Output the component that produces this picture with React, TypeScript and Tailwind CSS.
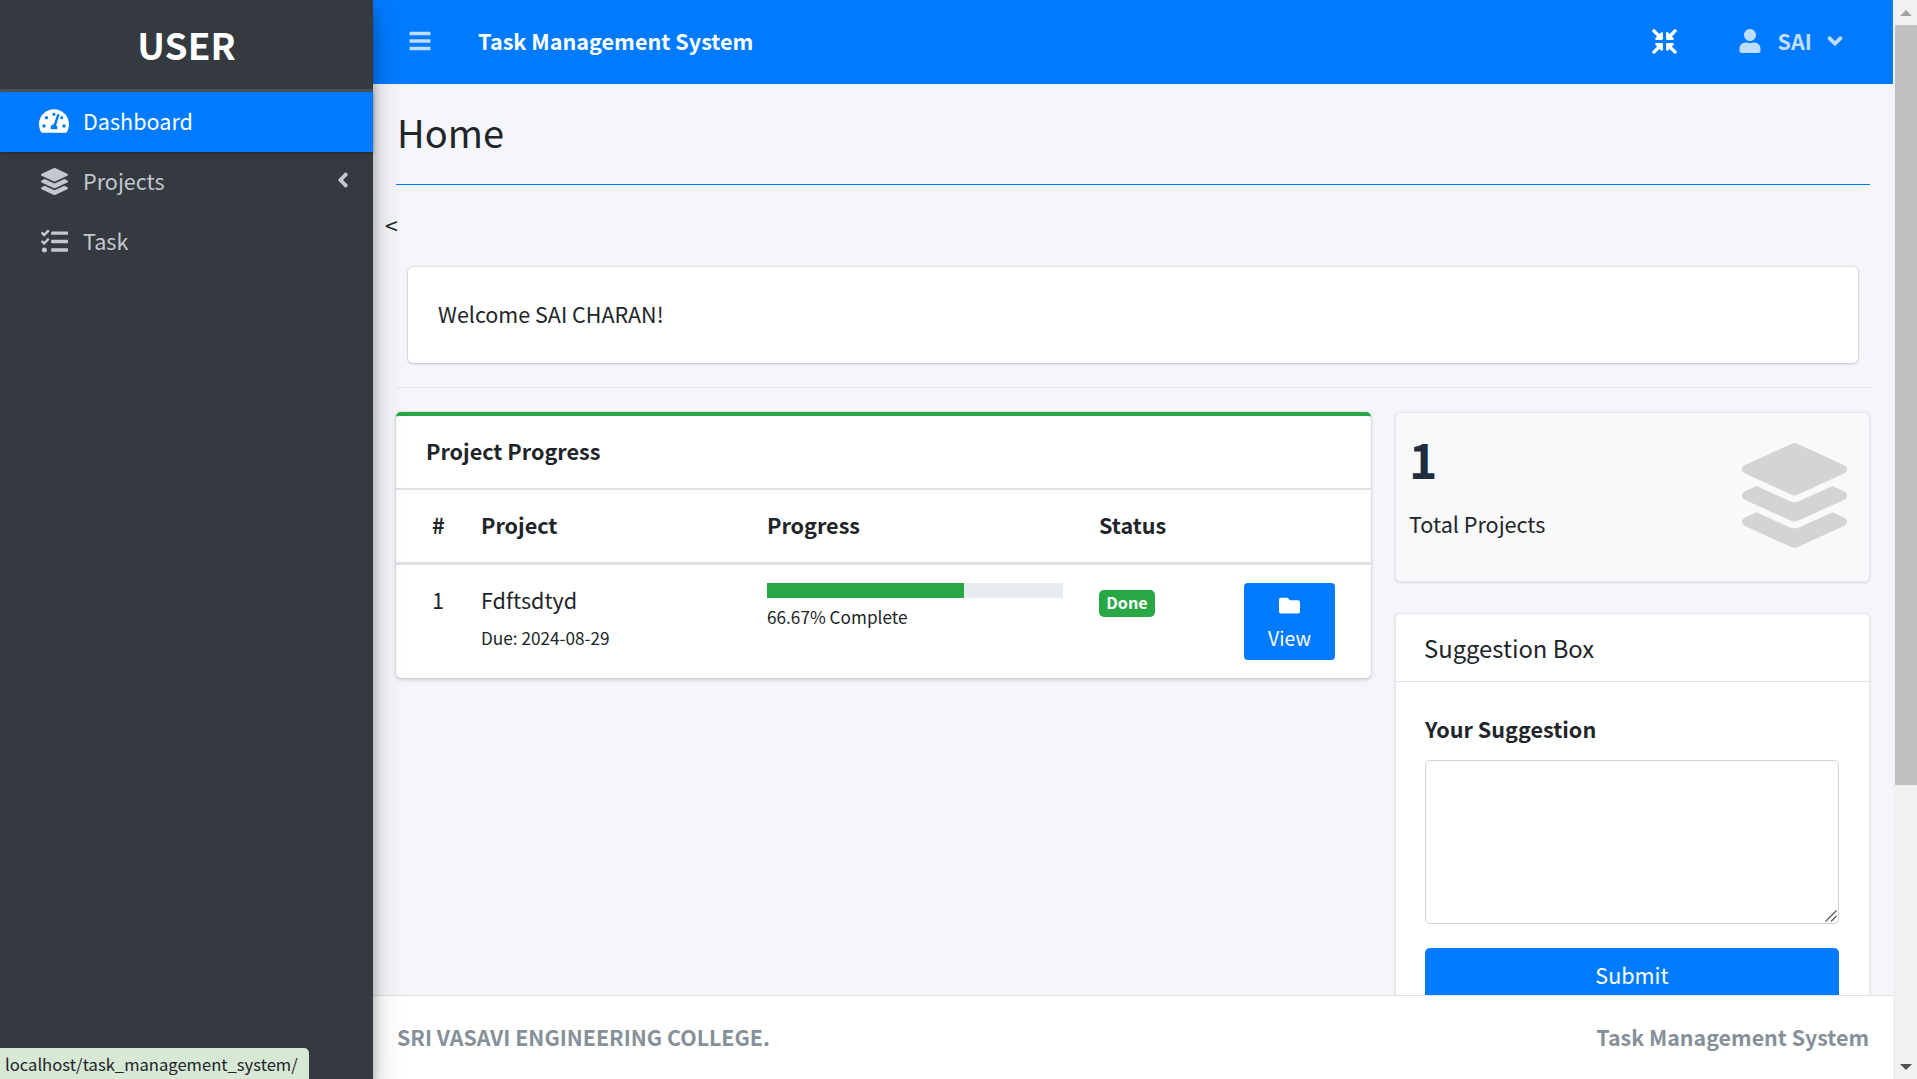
import { FaAngleDown, FaAngleLeft, FaBars, FaCompressArrowsAlt, FaFolder, FaLayerGroup, FaTachometerAlt, FaTasks, FaUser } from 'react-icons/fa';

const font = "font-['Noto_Sans_CJK_SC','Source_Sans_Pro',sans-serif]";

const Sidebar = () => (
  <aside className="relative z-10 w-[373px] shrink-0 bg-[#343a40] shadow-[0_14px_28px_rgba(0,0,0,0.25),0_10px_10px_rgba(0,0,0,0.22)]">
    <div className="flex h-[92px] items-center justify-center border-b-[3px] border-[#4b545c] text-[37px] font-bold text-white">USER</div>
    <nav>
      <a className="flex h-[60px] items-center bg-[#007bff] pb-[2px] pl-[39px] text-[21.6px] text-white shadow-[0_1px_3px_rgba(0,0,0,0.4)]">
        <FaTachometerAlt size={30} className="mr-[14px]" />
        Dashboard
      </a>
      <a className="flex h-[60px] items-center pb-[2px] pl-[41px] pr-[18px] text-[21.6px] text-[#c2c7d0]">
        <FaLayerGroup size={27} className="mr-[15px]" />
        Projects
        <FaAngleLeft size={24} className="mb-[2px] ml-auto" />
      </a>
      <a className="flex h-[60px] items-center pb-[2px] pl-[41px] text-[21.6px] text-[#c2c7d0]">
        <FaTasks size={27} className="mr-[15px]" />
        Task
      </a>
    </nav>
  </aside>
);

const Header = () => (
  <header className="flex h-[84px] shrink-0 items-center bg-[#007bff] pb-[2px] pl-[35px] pr-[46px]">
    <FaBars size={24} className="text-white/75" />
    <span className="ml-[46px] text-[21.6px] font-bold text-white">Task Management System</span>
    <FaCompressArrowsAlt size={25} className="ml-auto text-white" />
    <FaUser size={24} className="ml-[61px] text-white/75" />
    <span className="ml-[16px] text-[21.6px] font-bold text-white/75">SAI</span>
    <FaAngleDown size={24} className="ml-[11px] text-white/75" />
  </header>
);

const ProjectTable = () => (
  <div className="h-[266px] rounded-[5px] border-t-[4px] border-[#28a745] bg-white shadow-[0_0_2px_rgba(0,0,0,0.2),0_2px_4px_rgba(0,0,0,0.15)]">
    <div className="flex h-[74px] items-center border-b-2 border-[#dee2e6] pb-[2px] pl-[30px] text-[21.6px] font-bold">Project Progress</div>
    <div className="grid h-[75px] grid-cols-[49px_286px_332px_1fr] items-center border-b-[3px] border-[#dee2e6] pb-[2px] pl-[36px] text-[21.6px] font-bold">
      <span>#</span>
      <span>Project</span>
      <span>Progress</span>
      <span>Status</span>
    </div>
    <div className="grid grid-cols-[49px_286px_332px_145px_1fr] pl-[36px] pt-[18px]">
      <span className="-mt-[1px] text-[21.6px] leading-[36px]">1</span>
      <div>
        <div className="-mt-[1px] text-[21.6px] leading-[36px]">Fdftsdtyd</div>
        <div className="mt-[6px] text-[17.2px] leading-[28px]">Due: 2024-08-29</div>
      </div>
      <div>
        <div className="h-[15px] w-[296px] bg-[#e9ecef]">
          <div className="h-full w-[66.67%] bg-[#28a745]" />
        </div>
        <div className="mt-[5px] text-[17.2px] leading-[28px]">66.67% Complete</div>
      </div>
      <div className="pt-[7px]">
        <span className="inline-flex h-[27px] w-[56px] items-center justify-center rounded-[5px] bg-[#28a745] pb-[2px] text-[16.2px] font-bold text-white">Done</span>
      </div>
      <a className="flex h-[77px] w-[91px] flex-col items-center rounded-[4px] bg-[#007bff] pt-[12px] text-[19.4px] text-white">
        <FaFolder size={21} />
        <span className="mt-[7px]">View</span>
      </a>
    </div>
  </div>
);

const RightColumn = () => (
  <div className="flex w-[475px] shrink-0 flex-col gap-[31px]">
    <div className="flex h-[170px] items-start justify-between rounded-[5px] border border-[#e3e6ea] bg-[#f8f9fa] pl-[13px] pr-[22px] pt-[16px] shadow-[0_1px_3px_rgba(0,0,0,0.12)]">
      <div>
        <div className="text-[48px] font-bold leading-[58px] text-[#1f2d3d]">1</div>
        <div className="mt-[19px] text-[21.6px] leading-[36px]">Total Projects</div>
      </div>
      <FaLayerGroup size={105} className="mt-[14px] text-black/15" />
    </div>
    <div className="h-[420px] rounded-[5px] border border-[#e3e6ea] bg-white shadow-[0_1px_3px_rgba(0,0,0,0.12)]">
      <div className="flex h-[68px] items-center border-b border-[#dee2e6] pl-[28px] pt-[1px] text-[23.8px]">Suggestion Box</div>
      <div className="pl-[29px] pr-[30px] pt-[29px]">
        <div className="text-[21.6px] font-bold leading-[36px]">Your Suggestion</div>
        <div className="relative mt-[13px]">
          <textarea className="block h-[164px] w-full resize-none rounded-[5px] border border-[#ced4da] bg-white" />
          <svg viewBox="0 0 12 12" className="absolute bottom-[2px] right-[2px] h-[12px] w-[12px] stroke-[#555]" strokeWidth="1.2">
            <path d="M0.5 11.5 L11.5 0.5 M6 11.5 L11.5 6" />
          </svg>
        </div>
        <button className="mt-[24px] block h-[54px] w-full rounded-[5px] bg-[#007bff] text-[21.6px] text-white">Submit</button>
      </div>
    </div>
  </div>
);

const Scrollbar = () => (
  <div className="flex w-[24px] shrink-0 flex-col items-center bg-[#f1f1f1] pl-[2px]">
    <div className="flex h-[25px] items-center justify-center">
      <div className="border-x-[6px] border-b-[6px] border-x-transparent border-b-[#a3a3a3]" />
    </div>
    <div className="h-[760px] w-full bg-[#c1c1c1]" />
    <div className="flex flex-1 items-end pb-[9px]">
      <div className="border-x-[6px] border-t-[6px] border-x-transparent border-t-[#505050]" />
    </div>
  </div>
);

export default function App() {
  return (
    <div className={`relative flex h-screen overflow-hidden text-[#212529] ${font}`}>
      <Sidebar />
      <div className="flex min-w-0 flex-1 flex-col bg-[#f4f6f9]">
        <Header />
        <main className="min-h-0 flex-1 overflow-hidden px-[23px]">
          <div className="flex h-[101px] items-center border-b border-[#007bff] pb-[5px] pl-[1px] text-[38px] leading-[48px]">Home</div>
          <div className="-ml-[11px] mt-[26px] text-[23px] leading-[28px]">&lt;</div>
          <div className="mx-[12px] mt-[28px] flex h-[96px] items-center rounded-[5px] bg-white pb-[2px] pl-[30px] text-[21.5px] shadow-[0_0_2px_rgba(0,0,0,0.25),0_1px_3px_rgba(0,0,0,0.15)]">Welcome SAI CHARAN!</div>
          <hr className="mt-[24px] border-[#e4e6ea]" />
          <div className="mt-[24px] flex gap-[24px]">
            <div className="min-w-0 flex-1">
              <ProjectTable />
            </div>
            <RightColumn />
          </div>
        </main>
        <footer className="relative flex h-[84px] shrink-0 items-center justify-between border-t border-[#dee2e6] bg-white px-[24px] text-[21.4px] font-bold text-[#869099]">
          <span>SRI VASAVI ENGINEERING COLLEGE.</span>
          <span>Task Management System</span>
        </footer>
      </div>
      <Scrollbar />
      <div className="absolute bottom-0 left-0 z-20 flex h-[31px] items-center rounded-tr-[5px] bg-[#d7e8d4] pl-[5px] pr-[11px] pt-[2px] text-[16.6px] text-[#212529]">localhost/task_management_system/</div>
    </div>
  );
}
